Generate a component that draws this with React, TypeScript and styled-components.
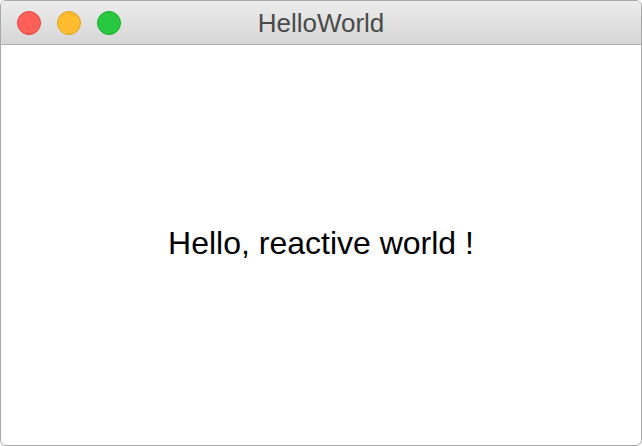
import React from "react";
import styled, { createGlobalStyle } from "styled-components";

const GlobalStyle = createGlobalStyle`
  html, body {
    margin: 0;
    padding: 0;
    background: #ffffff;
  }
  * {
    box-sizing: border-box;
  }
`;

const Window = styled.div`
  width: 642px;
  height: 446px;
  display: flex;
  flex-direction: column;
  border: 1px solid #a8a8a8;
  border-radius: 6px;
  overflow: hidden;
  background: #ffffff;
  font-family: "Liberation Sans", Arial, sans-serif;
`;

const TitleBar = styled.div`
  position: relative;
  height: 44px;
  flex-shrink: 0;
  display: flex;
  align-items: center;
  justify-content: center;
  background: linear-gradient(to bottom, #ececec, #d6d6d6);
  border-bottom: 1px solid #b1b1b1;
`;

const Lights = styled.div`
  position: absolute;
  left: 16px;
  top: 10px;
  display: flex;
  gap: 16px;
`;

interface LightProps {
  $fill: string;
  $edge: string;
}

const Light = styled.span<LightProps>`
  width: 24px;
  height: 24px;
  border-radius: 50%;
  background: ${p => p.$fill};
  border: 1px solid ${p => p.$edge};
`;

const Title = styled.div`
  font-size: 26px;
  color: #4a4a4a;
  margin-top: 1px;
`;

const Content = styled.div`
  flex: 1;
  display: flex;
  align-items: center;
  justify-content: center;
  padding-bottom: 4px;
`;

const Message = styled.div`
  font-size: 32px;
  color: #000000;
`;

export default function App() {
  return (
    <>
      <GlobalStyle />
      <Window>
        <TitleBar>
          <Lights>
            <Light $fill="#fe5f57" $edge="#e0443e" />
            <Light $fill="#febc2e" $edge="#dea123" />
            <Light $fill="#28c840" $edge="#1aab29" />
          </Lights>
          <Title>HelloWorld</Title>
        </TitleBar>
        <Content>
          <Message>Hello, reactive world !</Message>
        </Content>
      </Window>
    </>
  );
}
